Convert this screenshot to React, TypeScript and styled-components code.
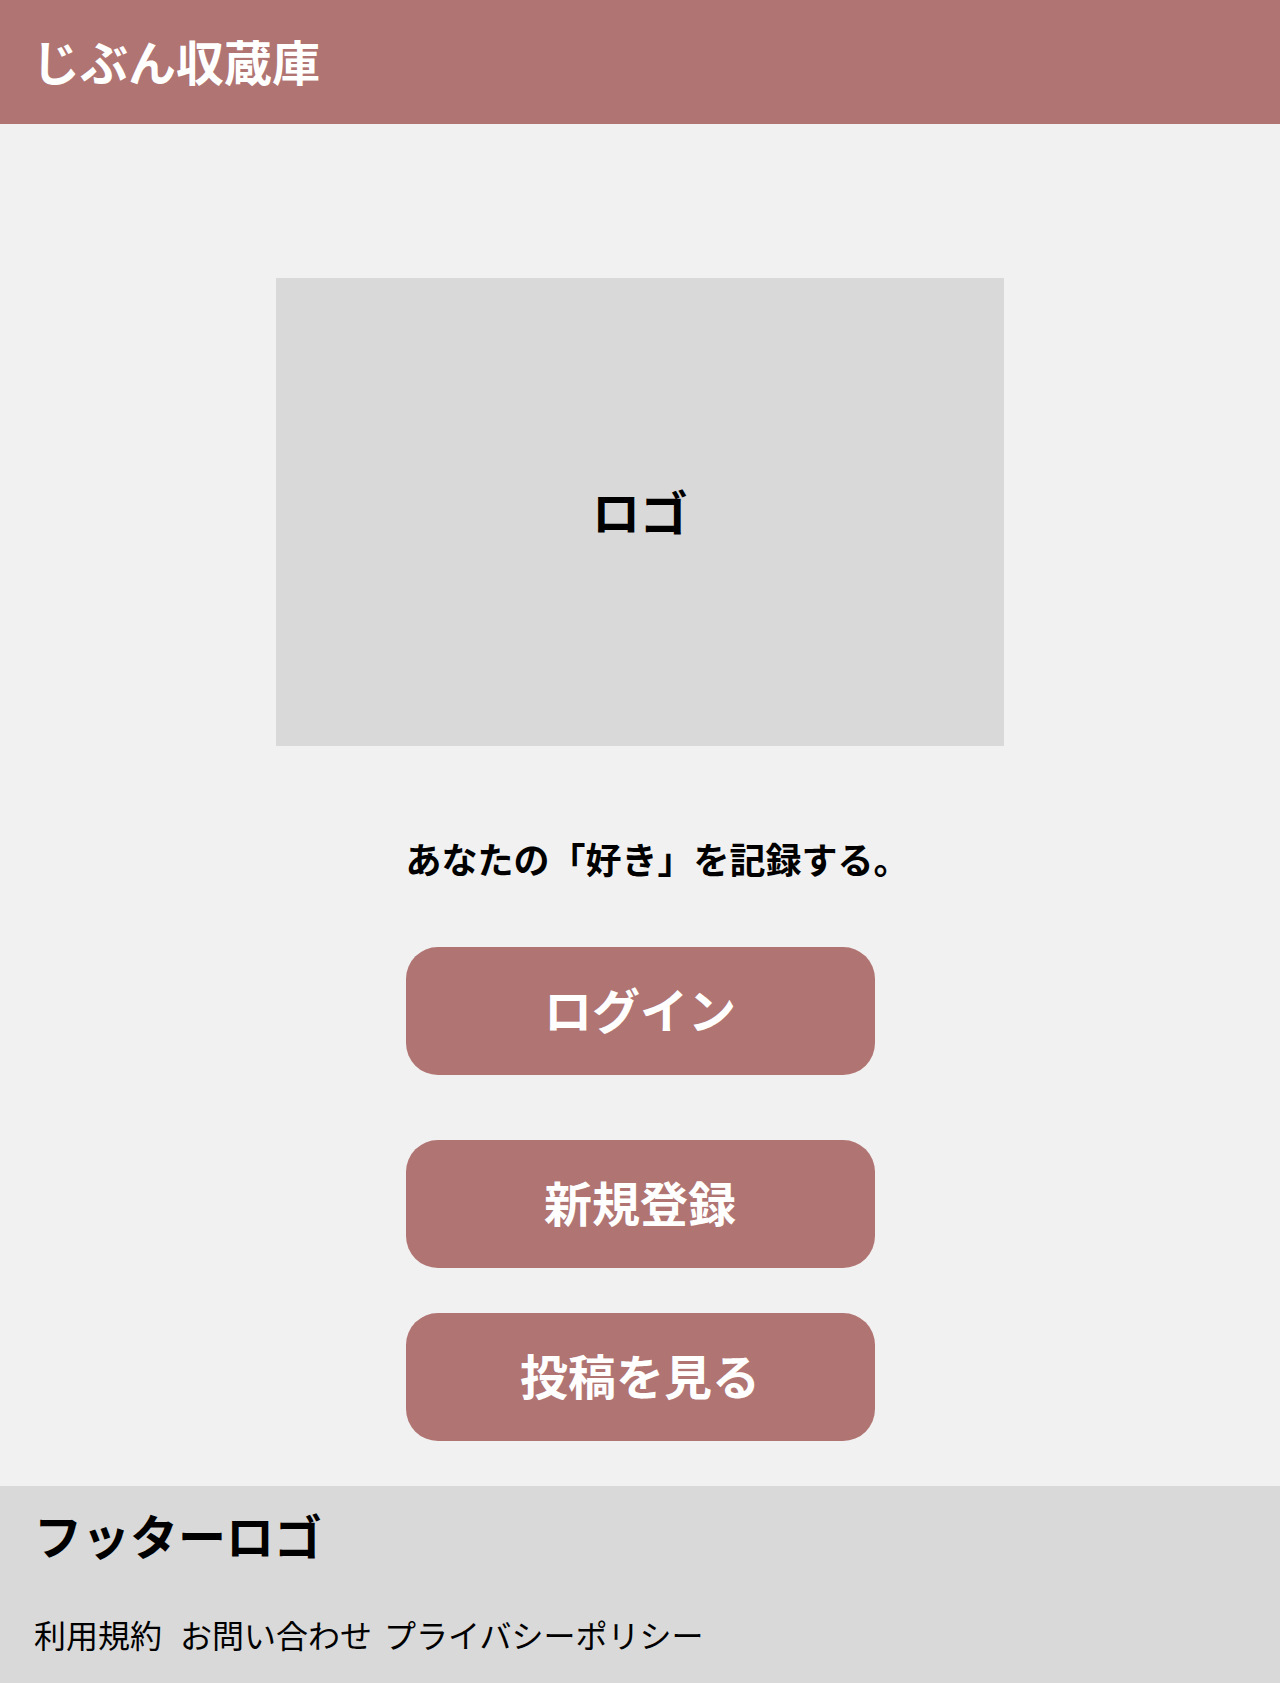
import React from "react";
import styled, { createGlobalStyle } from "styled-components";

const GlobalStyle = createGlobalStyle`
  html, body {
    margin: 0;
    padding: 0;
    background: #f1f1f1;
  }
  body {
    font-family: "Noto Sans CJK JP", "Noto Sans", sans-serif;
    color: #000;
  }
  * { box-sizing: border-box; }
`;

const Page = styled.div`
  display: flex;
  flex-direction: column;
  min-height: 1683px;
  background: #f1f1f1;
`;

const Header = styled.header`
  height: 124px;
  background: #b07472;
  display: flex;
  align-items: center;
  padding: 0 32px 4px;
`;

const SiteTitle = styled.h1`
  margin: 0;
  color: #fff;
  font-size: 48px;
  font-weight: 700;
  line-height: 1;
`;

const Main = styled.main`
  flex: 1;
  display: flex;
  flex-direction: column;
  align-items: center;
  padding: 154px 0 45px;
`;

const LogoBox = styled.div`
  width: 728px;
  height: 468px;
  background: #d9d9d9;
  display: flex;
  align-items: center;
  justify-content: center;
  font-size: 48px;
  font-weight: 700;
  padding-bottom: 4px;
`;

const Column = styled.div`
  width: 469px;
  display: flex;
  flex-direction: column;
`;

const Tagline = styled.p`
  margin: 86px 0 0;
  font-size: 36px;
  font-weight: 700;
  line-height: 52px;
  white-space: nowrap;
`;

const ButtonStack = styled.div`
  display: flex;
  flex-direction: column;
  margin-top: 63px;
`;

const ActionButton = styled.button<{ $gapBefore?: number }>`
  width: 469px;
  height: 128px;
  margin-top: ${(p) => p.$gapBefore ?? 0}px;
  padding: 0 0 6px;
  border: none;
  border-radius: 32px;
  background: #b07472;
  color: #fff;
  font-family: inherit;
  font-size: 48px;
  font-weight: 700;
  cursor: pointer;
  display: flex;
  align-items: center;
  justify-content: center;
`;

const Footer = styled.footer`
  height: 197px;
  background: #d9d9d9;
  padding: 19px 32px 0;
  display: flex;
  flex-direction: column;
`;

const FooterLogo = styled.div`
  font-size: 48px;
  font-weight: 700;
  line-height: 58px;
  padding-left: 2px;
`;

const FooterLinks = styled.nav`
  display: flex;
  margin-top: 48px;
  gap: 12px;
  padding-left: 2px;
`;

const FooterLink = styled.a<{ $extra?: number }>`
  font-size: 32px;
  line-height: 46px;
  color: #000;
  text-decoration: none;
  margin-right: ${(p) => p.$extra ?? 0}px;
`;

export default function App() {
  return (
    <>
      <GlobalStyle />
      <Page>
        <Header>
          <SiteTitle>じぶん収蔵庫</SiteTitle>
        </Header>
        <Main>
          <LogoBox>ロゴ</LogoBox>
          <Column>
            <Tagline>あなたの「好き」を記録する。</Tagline>
            <ButtonStack>
              <ActionButton>ログイン</ActionButton>
              <ActionButton $gapBefore={65}>新規登録</ActionButton>
              <ActionButton $gapBefore={45}>投稿を見る</ActionButton>
            </ButtonStack>
          </Column>
        </Main>
        <Footer>
          <FooterLogo>フッターロゴ</FooterLogo>
          <FooterLinks>
            <FooterLink href="#" $extra={6}>利用規約</FooterLink>
            <FooterLink href="#">お問い合わせ</FooterLink>
            <FooterLink href="#">プライバシーポリシー</FooterLink>
          </FooterLinks>
        </Footer>
      </Page>
    </>
  );
}
